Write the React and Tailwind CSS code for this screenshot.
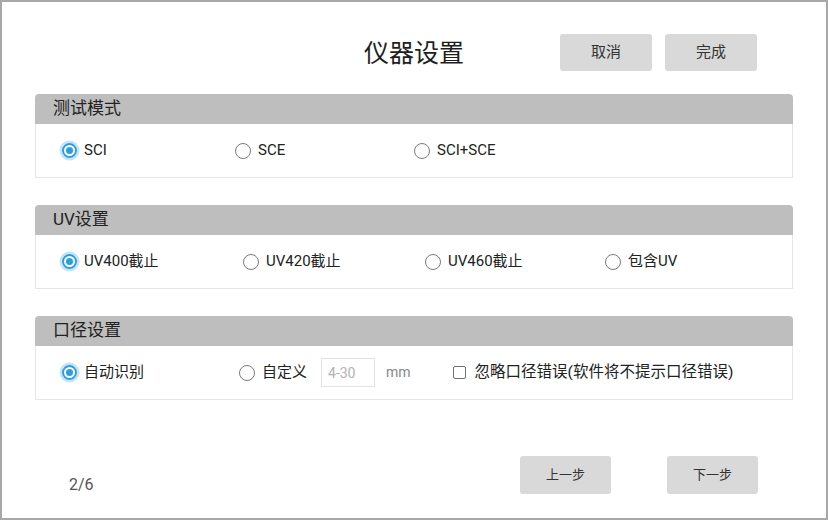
import React, { useState } from 'react';

function Radio({ checked }) {
  if (checked) {
    return (
      <span className="flex h-[15px] w-[15px] shrink-0 items-center justify-center rounded-full border-2 border-[#2b9de0] ring-[2.5px] ring-[#c4e4f7]">
        <span className="h-[7px] w-[7px] rounded-full bg-[#2b9de0]" />
      </span>
    );
  }
  return <span className="h-[16px] w-[16px] shrink-0 rounded-full border-[1.5px] border-[#7b7b7b]" />;
}

function Option({ label, checked, onClick, className }) {
  return (
    <div onClick={onClick} className={`flex cursor-pointer items-center gap-[7px] ${className}`}>
      <Radio checked={checked} />
      <span className="text-[15px] text-[#222]">{label}</span>
    </div>
  );
}

function Section({ title, children, className = '' }) {
  return (
    <div className={`ml-[33px] w-[758px] ${className}`}>
      <div className="flex h-[30px] items-center rounded-t-[4px] bg-[#bebebe] pl-[18px] text-[17px] text-[#222]">
        {title}
      </div>
      <div className="flex h-[54px] items-center border-x border-b border-[#e6e6e6] pl-[26px]">
        {children}
      </div>
    </div>
  );
}

export default function App() {
  const [mode, setMode] = useState('SCI');
  const [uv, setUv] = useState('400');
  const [aperture, setAperture] = useState('auto');
  const [ignoreErr, setIgnoreErr] = useState(false);

  return (
    <div className="h-[520px] w-[828px] border-2 border-[#a8a8a8] bg-white [font-family:Roboto,'Noto_Sans_CJK_SC',sans-serif]">
      {/* top bar */}
      <div className="mt-[32px] grid grid-cols-[1fr_auto_1fr] items-center">
        <div />
        <div className="pt-[2px] text-[25px] leading-none text-[#1e1e1e]">仪器设置</div>
        <div className="flex justify-end gap-[13px] pr-[69px]">
          <button className="h-[37px] w-[92px] rounded-[3px] bg-[#d9d9d9] text-[15px] text-[#333]">取消</button>
          <button className="h-[37px] w-[92px] rounded-[3px] bg-[#d9d9d9] text-[15px] text-[#333]">完成</button>
        </div>
      </div>

      <Section title="测试模式" className="mt-[23px]">
        <Option label="SCI" checked={mode === 'SCI'} onClick={() => setMode('SCI')} className="w-[173px]" />
        <Option label="SCE" checked={mode === 'SCE'} onClick={() => setMode('SCE')} className="w-[179px]" />
        <Option label="SCI+SCE" checked={mode === 'SCI+SCE'} onClick={() => setMode('SCI+SCE')} />
      </Section>

      <Section title="UV设置" className="mt-[27px]">
        <Option label="UV400截止" checked={uv === '400'} onClick={() => setUv('400')} className="w-[181px]" />
        <Option label="UV420截止" checked={uv === '420'} onClick={() => setUv('420')} className="w-[182px]" />
        <Option label="UV460截止" checked={uv === '460'} onClick={() => setUv('460')} className="w-[180px]" />
        <Option label="包含UV" checked={uv === 'all'} onClick={() => setUv('all')} />
      </Section>

      <Section title="口径设置" className="mt-[27px]">
        <Option label="自动识别" checked={aperture === 'auto'} onClick={() => setAperture('auto')} className="w-[177px]" />
        <Option label="自定义" checked={aperture === 'custom'} onClick={() => setAperture('custom')} />
        <input
          placeholder="4-30"
          className="ml-[14px] h-[29px] w-[54px] border border-[#e3e3e3] px-[6px] text-[14px] text-[#555] outline-none placeholder:text-[#b3b3b3]"
        />
        <span className="ml-[11px] text-[14px] text-[#888]">mm</span>
        <div onClick={() => setIgnoreErr(!ignoreErr)} className="ml-[42px] flex cursor-pointer items-center gap-[9px]">
          <span className={`h-[13px] w-[13px] rounded-[2px] border-[1.5px] border-[#707070] ${ignoreErr ? 'bg-[#2b9de0]' : ''}`} />
          <span className="text-[15.5px] text-[#222]">忽略口径错误(软件将不提示口径错误)</span>
        </div>
      </Section>

      {/* footer */}
      <div className="mt-[56px] flex items-end">
        <span className="mb-[1px] ml-[67px] text-[16px] leading-none text-[#555]">2/6</span>
        <div className="ml-auto flex gap-[56px] pr-[68px]">
          <button className="h-[38px] w-[91px] rounded-[3px] bg-[#d9d9d9] text-[13px] text-[#333]">上一步</button>
          <button className="h-[38px] w-[91px] rounded-[3px] bg-[#d9d9d9] text-[13px] text-[#333]">下一步</button>
        </div>
      </div>
    </div>
  );
}
